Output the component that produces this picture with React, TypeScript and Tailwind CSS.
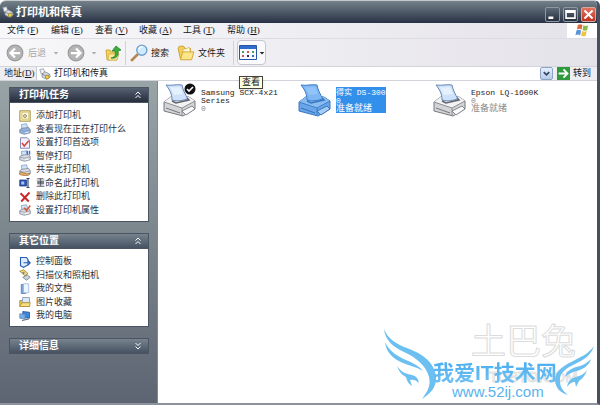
import { useState } from 'react';
import type { ReactNode } from 'react';

const Svg = ({ size, children, className }: { size: number; children: ReactNode; className?: string }) => (
  <svg viewBox="0 0 16 16" width={size} height={size} className={`shrink-0 ${className ?? ''}`} aria-hidden="true">
    {children}
  </svg>
);

const SmallPrinter = ({ tint = '#d9dde6' }: { tint?: string }) => (
  <>
    <path d="M4 8 3 2l7-1 2 6z" fill="#cfe2fa" stroke="#7f9cc4" />
    <path d="m1 9 3-2 9-1 2 3v4l-8 2-6-2z" fill={tint} stroke="#7b8190" />
    <path d="m1 9.500 6 1.500 8-2" fill="none" stroke="#8d93a2" />
    <path d="m8 13 5-1" stroke="#fff" />
  </>
);

const TitlePrinter = () => (
  <>
    <path d="m1 2 5-1 2 6-5 1z" fill="#eef1f6" stroke="#8e959f" />
    <path d="m4 8 4-3 6 3 1 4-5 3-6-3z" fill="#d4d9e0" stroke="#7d858f" />
    <path d="m4 8 6 3 4-2" fill="none" stroke="#6f7783" />
    <circle cx="11" cy="12" r="2.500" fill="#e9cf52" stroke="#a58a1c" />
  </>
);

const PrinterIcon = ({ selected, isDefault }: { selected?: boolean; isDefault?: boolean }) => (
  <svg viewBox="0 0 34 34" width="34" height="34" className="shrink-0" aria-hidden="true">
    <path
      d="M1 19 9 13l17 1 6 4v8l-12 7L1 28z"
      fill={selected ? '#69a5e8' : '#d3d4d6'}
      stroke={selected ? '#3876bd' : '#77797d'}
    />
    <path d="m1 19 8-6 17 1 6 4-13 7z" fill={selected ? '#8abbf2' : '#f3f3f4'} />
    <path d="m1 19 18 6 13-7M19 25v7" fill="none" stroke={selected ? '#3f7fc8' : '#8b8d92'} />
    <path
      d="M9 17C9 10 6 6 3 2c6 1 10-1 16 0 1 5 3 9 6 14-5 1-9 3-16 1z"
      fill={selected ? '#7fb7f4' : '#cfe2fb'}
      stroke={selected ? '#397bc8' : '#6485b5'}
    />
    <path d="M7 4c4 1 7 0 10 0l3 7-9 1z" fill={selected ? '#93c4f8' : '#e6f1fe'} />
    <path d="m9 18 4 2 13-3-2-2" fill="none" stroke={selected ? '#3b79bd' : '#63676d'} strokeWidth="1.500" />
    <path
      d="m19 28 10-5 3 3-9 6z"
      fill={selected ? '#a5cdf8' : '#fafafa'}
      stroke={selected ? '#3674b8' : '#85878c'}
    />
    <path d="m3 25 14 5" stroke={selected ? '#3472b8' : '#75777c'} />
    {isDefault && (
      <>
        <circle cx="27" cy="6" r="5.500" fill="#111" />
        <path d="m24 6 2 2 4-4" fill="none" stroke="#fff" strokeWidth="1.700" />
      </>
    )}
  </svg>
);

const Folder = () => (
  <>
    <path d="M1 4 2 2h4l1 2h5v9H3z" fill="#f1cf5b" stroke="#c99a2b" strokeWidth=".8" />
    <path d="m5 5 6-2 2 8-6 2z" fill="#fff8d8" stroke="#d4b04a" strokeWidth=".6" />
    <path d="m3 14 2-7h10l-2 7z" fill="#fae588" stroke="#cfa133" strokeWidth=".8" />
  </>
);

const tasks: { label: string; icon: ReactNode }[] = [
  {
    label: '添加打印机',
    icon: (
      <>
        <path d="M1 1h14v14H1z" fill="#f6e9a6" stroke="#8e7c34" />
        <path d="M4 3h9v9H4z" fill="#fffdf0" stroke="#cdb55c" />
        <circle cx="8" cy="8" r="2" fill="#e9e3c0" stroke="#7b7452" />
      </>
    ),
  },
  { label: '查看现在正在打印什么', icon: <SmallPrinter tint="#8fb4e6" /> },
  {
    label: '设置打印首选项',
    icon: (
      <>
        <path d="M2 1h9l3 3v11H2z" fill="#f0f1fb" stroke="#66699a" />
        <path d="m4 8 3 4 6-7" fill="none" stroke="#d0443c" strokeWidth="2" />
      </>
    ),
  },
  {
    label: '暂停打印',
    icon: (
      <>
        <SmallPrinter />
        <path d="M11 1v5M14 1v5" stroke="#3d6fc0" strokeWidth="2" />
      </>
    ),
  },
  {
    label: '共享此打印机',
    icon: (
      <>
        <SmallPrinter />
        <path d="M1 12c3-3 7 3 13 0v2c-4 3-9 1-13 0z" fill="#e8b069" stroke="#a3703a" />
      </>
    ),
  },
  {
    label: '重命名此打印机',
    icon: (
      <>
        <path d="M1 4h9v8H1z" fill="#2e57b8" stroke="#1b3473" />
        <path d="M3 6h4v4H3z" fill="#a9c4f4" />
        <path d="M10 2h4M12 2v12M10 14h4" stroke="#2b3f74" strokeWidth="1.500" />
      </>
    ),
  },
  { label: '删除此打印机', icon: <path d="m2 3 11 11M14 2 3 14" stroke="#c8242b" strokeWidth="2.500" /> },
  {
    label: '设置打印机属性',
    icon: (
      <>
        <SmallPrinter />
        <path d="m7 5 3 4 5-7" fill="none" stroke="#dc5a3c" strokeWidth="2" />
      </>
    ),
  },
];

const places: { label: string; icon: ReactNode }[] = [
  {
    label: '控制面板',
    icon: (
      <>
        <path d="M2 2h8l2 3v7l-6 3-4-2z" fill="#dcebff" stroke="#2a5db0" strokeWidth="1.500" />
        <path d="M6 9h8M12 6l3 3-3 3" fill="none" stroke="#2f5fa8" strokeWidth="1.500" />
      </>
    ),
  },
  {
    label: '扫描仪和照相机',
    icon: (
      <>
        <path d="m1 3 5-2 6 5-4 3z" fill="#f3dc72" stroke="#927c28" />
        <path d="m5 11 6-3 4 3-5 4z" fill="#cdd3df" stroke="#6a7285" />
        <circle cx="6" cy="5" r="1.500" fill="#6f7fae" />
      </>
    ),
  },
  {
    label: '我的文档',
    icon: (
      <>
        <path d="M3 2h6v12H3z" fill="#7da6dc" stroke="#4e76b4" />
        <path d="M6 1h7v12H6z" fill="#edf4fe" stroke="#9ab2d3" />
      </>
    ),
  },
  {
    label: '图片收藏',
    icon: (
      <>
        <path d="M1 6h13v8H1z" fill="#efc957" stroke="#a87f25" />
        <path d="M5 2h9v7H4z" fill="#d9e9fb" stroke="#7d8ca3" />
        <path d="m1 14 3-5h11l-1 5z" fill="#f8df82" stroke="#b08a2e" />
      </>
    ),
  },
  {
    label: '我的电脑',
    icon: (
      <>
        <path d="m5 2 9 1v8l-9-1z" fill="#3b86dc" stroke="#244f91" />
        <path d="m1 5 7 1v6l-7-1z" fill="#6fb2f1" stroke="#6d87ab" />
        <path d="m4 14 9-2" stroke="#59657a" strokeWidth="1.500" />
      </>
    ),
  },
];

const menus = [
  { label: '文件', mark: 'F' },
  { label: '编辑', mark: 'E' },
  { label: '查看', mark: 'V' },
  { label: '收藏', mark: 'A' },
  { label: '工具', mark: 'T' },
  { label: '帮助', mark: 'H' },
];

const printers = [
  { name: 'Samsung SCX-4x21 Series', jobs: 0, status: '', isDefault: true },
  { name: '得实 DS-300', jobs: 0, status: '准备就绪', isDefault: false },
  { name: 'Epson LQ-1600K', jobs: 0, status: '准备就绪', isDefault: false },
];

interface PanelProps {
  title: string;
  open: boolean;
  dark?: boolean;
  children?: ReactNode;
}

const Panel = ({ title, open, dark, children }: PanelProps) => (
  <section>
    <button
      className={`flex h-4 w-full items-center justify-between border border-[#4b5562] bg-linear-to-b pr-1.5 pl-[9px] text-[10px] leading-3 font-bold text-white ${
        dark ? 'from-[#566171] to-[#272e3e]' : 'from-[#77848e] to-[#465262]'
      }`}
    >
      {title}
      <Svg size={8}>
        <path
          d={open ? 'm3 7 5-5 5 5M3 14l5-5 5 5' : 'm3 2 5 5 5-5M3 9l5 5 5-5'}
          fill="none"
          stroke="#fff"
          strokeWidth="2"
        />
      </Svg>
    </button>
    {open && <div className="border border-t-0 border-[#4b5562] bg-white pt-1.5 pb-1 pl-[9px]">{children}</div>}
  </section>
);

const LinkList = ({ items, className }: { items: typeof tasks; className: string }) => (
  <ul className={`flex flex-col justify-between ${className}`}>
    {items.map((item) => (
      <li key={item.label} className="h-[13px]">
        <a href="#" className="flex items-center gap-[5px] text-[9px] leading-[13px] text-[#29303c]">
          <Svg size={12}>{item.icon}</Svg>
          {item.label}
        </a>
      </li>
    ))}
  </ul>
);

const TitleBar = () => (
  <header className="flex h-[22px] items-center bg-linear-to-b from-[#74818a] via-[#4e5a68] to-[#293144] pr-px pl-0.5">
    <Svg size={12}>
      <TitlePrinter />
    </Svg>
    <h1 className="ml-0.5 flex-1 text-[11px] leading-4 font-bold text-white">打印机和传真</h1>
    <div className="flex gap-[3px] pt-1">
      <button aria-label="最小化" className="rounded-xs border border-[#8d98a5] bg-linear-to-b from-[#5e6a78] to-[#27303f]">
        <Svg size={13}>
          <path d="M3 12h6" stroke="#fff" strokeWidth="3" />
        </Svg>
      </button>
      <button aria-label="最大化" className="rounded-xs border border-[#8d98a5] bg-linear-to-b from-[#5e6a78] to-[#27303f]">
        <Svg size={13}>
          <path d="M2.500 3.500h11v9h-11zM2 5h12" fill="none" stroke="#fff" strokeWidth="2" />
        </Svg>
      </button>
      <button aria-label="关闭" className="rounded-xs border border-[#d9a69c] bg-linear-to-b from-[#e2715d] to-[#c0301f]">
        <Svg size={13}>
          <path d="m3 3 10 10M13 3 3 13" stroke="#fff" strokeWidth="2.500" />
        </Svg>
      </button>
    </div>
  </header>
);

const MenuBar = () => (
  <nav className="flex h-4 items-stretch justify-between border-b border-[#dddce3] bg-linear-to-r from-[#f8f8fa] to-[#e5e3ea]">
    <div className="flex pl-[7px]">
      {menus.map((menu) => (
        <button key={menu.mark} className="w-11 text-left text-[9px] leading-[15px] whitespace-nowrap">
          {menu.label} (<span className="underline">{menu.mark}</span>)
        </button>
      ))}
    </div>
    <div className="flex w-[30px] items-center justify-center bg-white">
      <Svg size={15}>
        <path d="M3 2c2-1 3-1 5 0L7 7C5 6 4 6 2 7z" fill="#e2683d" />
        <path d="M9 2.500c2 1 3 1 5 0l-1 5c-2 1-3 1-5 0z" fill="#8abb45" />
        <path d="M1.500 8c2-1 3-1 5 0l-1 5c-2-1-3-1-5 0z" fill="#5b93d8" />
        <path d="M7.500 8.500c2 1 3 1 5 0l-1 5c-2 1-3 1-5 0z" fill="#f1c244" />
      </Svg>
    </div>
  </nav>
);

const Caret = ({ dark }: { dark?: boolean }) => (
  <Svg size={6}>
    <path d="M2 5h12l-6 7z" fill={dark ? '#222' : '#aaa'} />
  </Svg>
);

const Toolbar = () => (
  <div className="flex h-[27px] items-center bg-linear-to-r from-[#f7f7f9] to-[#e5e3ea] pl-[6px] text-[9px] leading-4">
    <button disabled className="flex items-center text-[#a5a5a8]">
      <Svg size={18}>
        <circle cx="8" cy="8" r="7" fill="#b4b4b4" stroke="#9a9a9a" />
        <path d="M12.500 8H5M8 4 4 8l4 4" fill="none" stroke="#fff" strokeWidth="2" />
      </Svg>
      <span className="mr-[7px] ml-1">后退</span>
      <Caret />
    </button>
    <button disabled aria-label="前进" className="ml-2 flex items-center gap-[6px]">
      <Svg size={18}>
        <circle cx="8" cy="8" r="7" fill="#b4b4b4" stroke="#9a9a9a" />
        <path d="M3.500 8H11M8 4l4 4-4 4" fill="none" stroke="#fff" strokeWidth="2" />
      </Svg>
      <Caret />
    </button>
    <button aria-label="向上" className="ml-2">
      <Svg size={16}>
        <path d="M1 5h4l1 2h7l-1 8H2z" fill="#f3d35f" stroke="#c69a2b" strokeWidth=".8" />
        <path d="m3 15 1-6h10l-2 6z" fill="#fbeb9a" stroke="#cba33a" strokeWidth=".6" />
        <path d="M6 13c4-1 5-3 4-7H7l4-5 5 4-3 1c1 5-2 8-7 7z" fill="#3bad3b" stroke="#207d27" strokeWidth=".7" />
      </Svg>
    </button>
    <span className="mx-1 h-6 w-px bg-[#d2d1d9]" />
    <button className="flex items-center gap-[3px]">
      <Svg size={18}>
        <path d="m1 15 6-6" stroke="#b78552" strokeWidth="2.500" />
        <circle cx="10.500" cy="5.500" r="4.500" fill="#cfeafd" stroke="#6d9fcb" strokeWidth="1.200" />
        <path d="M8 5c0-2 2-3 3-2" fill="none" stroke="#fff" strokeWidth="1.200" />
      </Svg>
      搜索
    </button>
    <button className="ml-2 flex items-center gap-[3px]">
      <Svg size={18}>
        <Folder />
      </Svg>
      文件夹
    </button>
    <span className="ml-2 h-6 w-px bg-[#d2d1d9]" />
    <div className="relative ml-[3px]">
      <button
        aria-label="查看"
        aria-describedby="view-tip"
        className="flex h-[25px] w-[29px] items-center justify-center gap-0.5 rounded-sm border border-[#c6c5d0] bg-[#fafafc]"
      >
        <svg viewBox="0 0 18 15" width="18" height="15" aria-hidden="true">
          <path d="M.5.5h17v14H.5z" fill="#f7fbff" stroke="#2655a4" />
          <path d="M1 1h16v3H1z" fill="#2f6ccc" />
          <path d="M3 6h2v2H3zM13 6h2v2h-2z" fill="#55a050" />
          <path d="M8 6h2v2H8zM3 10h2v2H3z" fill="#ce5a50" />
          <path d="M8 10h2v2H8z" fill="#262f55" />
          <path d="M13 10h2v2h-2z" fill="#3a66c0" />
        </svg>
        <Caret dark />
      </button>
      <span
        id="view-tip"
        role="tooltip"
        className="absolute top-9 left-0.5 z-10 border border-[#44443c] bg-[#ffffe1] px-0.5 text-[9px] leading-[11px] whitespace-nowrap shadow-sm"
      >
        查看
      </span>
    </div>
  </div>
);

const AddressBar = () => {
  const [address, setAddress] = useState('打印机和传真');

  return (
    <div className="flex h-[15px] items-stretch border-y border-[#d3d3da] bg-[#eeedf2] pr-[6px] pl-1 text-[9px] leading-[13px]">
      <label htmlFor="address" className="w-8">
        地址(<span className="underline">D</span>)
      </label>
      <div className="flex flex-1 items-center gap-[3px] border-l border-[#c5cbd6] bg-white pl-0.5">
        <Svg size={12}>
          <TitlePrinter />
        </Svg>
        <input
          id="address"
          value={address}
          onChange={(e) => setAddress(e.target.value)}
          className="h-[13px] min-w-0 flex-1 bg-transparent outline-none"
        />
        <button aria-label="展开" className="rounded-xs border border-[#8ba3c5] bg-linear-to-b from-[#e6f0fd] to-[#b7ccea]">
          <Svg size={11}>
            <path d="m4 6 4 4 4-4" fill="none" stroke="#33455f" strokeWidth="2.500" />
          </Svg>
        </button>
      </div>
      <button className="ml-1 flex items-center gap-[3px]">
        <Svg size={13}>
          <path d="M0 0h16v16H0z" fill="#2f9a3c" />
          <path d="M2 8h10M8 3l5 5-5 5" fill="none" stroke="#fff" strokeWidth="2.200" />
        </Svg>
        转到
      </button>
    </div>
  );
};

const Watermark = () => (
  <div className="pointer-events-none absolute right-0 bottom-0 h-[78px] w-[216px]">
    <span className="absolute top-0 left-[90px] text-[35px] leading-9 whitespace-nowrap text-white [-webkit-text-stroke:1px_#dcdcdc]">
      土巴兔
    </span>
    <span className="absolute top-11 left-[108px] font-['Liberation_Sans'] text-[15px] leading-4 text-white [-webkit-text-stroke:1px_#e2e2e2]">
      TO8TO.COM
    </span>
    <svg viewBox="0 0 216 78" width="216" height="78" className="absolute inset-0" fill="#6cbff1" aria-hidden="true">
      <path d="M3 4c4 10 12 15 23 19 16 6 28 15 29 29 1 10-6 17-14 22 6-8 9-14 7-22C45 40 34 32 23 27 12 22 4 15 3 4z" />
      <path d="M4 17c4 9 12 14 21 18 7 3 13 6 17 11-6-4-13-5-20-8C12 34 5 27 4 17z" />
      <path d="M16 41c4 6 9 8 15 9 4 1 6 3 7 8-3-3-6-4-9-3l2 6c-4-3-5-5-6-9-4-2-7-5-9-11z" />
      <path d="M213 21c-3 9-9 13-17 17-11 5-18 10-17 18 0 6 3 10 8 14-8-2-13-8-13-15 0-10 10-15 20-20 8-4 14-7 19-14z" />
      <path d="M210 34c-2 7-8 10-14 12-5 1-9 3-12 6 1-5 5-8 11-10 6-1 11-4 15-8z" />
      <path d="M206 45c-2 6-5 9-8 11l-3 6-1-5c-3 0-5 1-8 5 1-6 4-9 9-10 4-1 8-3 11-7z" />
    </svg>
    <span className="absolute top-[37px] left-[52px] bg-linear-to-b from-[#49aef0] to-[#72c1f2] bg-clip-text font-['Liberation_Sans','Noto_Sans_CJK_SC',sans-serif] text-[21px] leading-[22px] font-bold whitespace-nowrap text-transparent">
      我爱IT技术网
    </span>
    <a href="#" className="absolute top-[59px] left-[71px] font-['Liberation_Sans'] text-[15px] leading-4 text-[#58b3ee]">
      www.52ij.com
    </a>
  </div>
);

export default function App() {
  const [selected, setSelected] = useState(1);

  return (
    <div className="flex min-h-screen flex-col overflow-hidden rounded-t-md border-t border-r-3 border-b-2 border-t-[#c3c8cc] border-r-[#465060] border-b-[#8d939d] bg-white font-['Liberation_Serif','Noto_Sans_CJK_SC',sans-serif] text-[#16181c]">
      <TitleBar />
      <MenuBar />
      <Toolbar />
      <AddressBar />

      <div className="flex flex-1">
        <aside className="flex w-[158px] shrink-0 flex-col gap-[11px] border-r border-[#7e8a90] bg-linear-to-b from-[#98a4a6] to-[#5d6572] pt-1.5 pr-2 pl-[9px]">
          <Panel title="打印机任务" open dark>
            <LinkList items={tasks} className="h-[108px]" />
          </Panel>
          <Panel title="其它位置" open>
            <LinkList items={places} className="h-[67px]" />
          </Panel>
          <Panel title="详细信息" open={false} />
        </aside>

        <main className="relative flex-1 bg-white">
          <ul className="grid grid-cols-[repeat(auto-fill,135px)] pt-0.5 pl-[5px]">
            {printers.map((printer, i) => (
              <li key={printer.name}>
                <button onClick={() => setSelected(i)} className="flex w-full items-start gap-1 text-left">
                  <PrinterIcon selected={i === selected} isDefault={printer.isDefault} />
                  <span
                    className={`mt-1 pt-0.5 font-['Liberation_Mono','Noto_Sans_CJK_SC',monospace] text-[8px] leading-2 ${
                      i === selected ? 'bg-[#3390ea] text-white' : 'text-[#8a8a8a]'
                    }`}
                  >
                    <span className={i === selected ? 'block' : 'block text-[#1c1c1c]'}>{printer.name}</span>
                    <span className="block">{printer.jobs}</span>
                    {printer.status && <span className="block text-[9px]">{printer.status}</span>}
                  </span>
                </button>
              </li>
            ))}
          </ul>
          <Watermark />
        </main>
      </div>
    </div>
  );
}
